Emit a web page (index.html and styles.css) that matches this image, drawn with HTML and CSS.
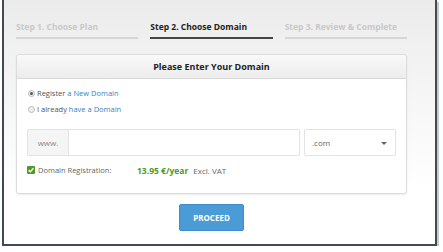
FILE: index.html
```html
<!DOCTYPE html>
<html>
<head>
<meta charset="utf-8">
<link rel="stylesheet" href="styles.css">
</head>
<body>
<div class="frame">
  <div class="steps">
    <div class="step done">Step 1. Choose Plan</div>
    <div class="step active">Step 2. Choose Domain</div>
    <div class="step">Step 3. Review &amp; Complete</div>
  </div>
  <div class="card">
    <div class="card-head">Please Enter Your Domain</div>
    <div class="card-body">
      <label class="radio"><span class="dot checked"></span>Register&nbsp;<a>a New Domain</a></label>
      <label class="radio"><span class="dot"></span>I already&nbsp;<a>have a Domain</a></label>
      <div class="domain-row">
        <div class="group">
          <span class="addon">www.</span>
          <span class="input"></span>
        </div>
        <div class="select">.com<span class="caret"></span></div>
      </div>
      <div class="reg">
        <span class="check"><svg viewBox="0 0 8 8" width="8" height="8"><path d="M1.6 4.2 L3.3 5.8 L6.4 2.3" fill="none" stroke="#fff" stroke-width="1.3"/></svg></span>
        <span class="reg-label">Domain Registration:</span>
        <span class="price">13.95 €/year</span>
        <span class="vat">Excl. VAT</span>
      </div>
    </div>
  </div>
  <div class="actions"><button class="btn">PROCEED</button></div>
</div>
</body>
</html>
```

FILE: styles.css
```css
html, body { margin: 0; padding: 0; background: #fff; }
body { font-family: "Open Sans", "Liberation Sans", sans-serif; color: #333; }
.frame {
  box-sizing: border-box;
  margin-left: 2px;
  width: 435px;
  height: 246px;
  padding: 0 28px 0 12px;
  border: 2px solid #3f4957;
  border-top: 0;
  box-shadow: 2px 2px 0 #c9c9c9;
  background: linear-gradient(#ebebeb 0, #f1f1f1 50px, #f9f9f9 130px, #fff 190px);
}
.steps {
  display: grid;
  grid-template-columns: repeat(3, 1fr);
  column-gap: 12px;
  padding-top: 21px;
}
.step {
  font-size: 8.5px;
  font-weight: 700;
  color: #c9c9c9;
  padding-bottom: 4px;
  border-bottom: 2px solid #d6d6d6;
  line-height: 12px;
  white-space: nowrap;
}
.step.active { color: #222; border-bottom-color: #444; }
.card {
  margin-top: 15px;
  background: #fff;
  border: 1px solid #dcdcdc;
  border-radius: 3px;
  box-shadow: 0 1px 2px rgba(0,0,0,0.08);
}
.card-head {
  height: 23px;
  line-height: 23px;
  text-align: center;
  font-size: 9px;
  font-weight: 700;
  color: #222;
  background: linear-gradient(#f9f9f9, #ececec);
  border-bottom: 1px solid #dadada;
  border-radius: 3px 3px 0 0;
}
.card-body { padding: 6px 10px 15px 10px; }
.radio {
  display: flex;
  align-items: center;
  font-size: 7.5px;
  color: #555;
  height: 16px;
  padding-left: 1px;
}
.radio a { color: #3b7fc4; }
.dot {
  width: 5px; height: 5px;
  border: 1px solid #bbb;
  border-radius: 50%;
  background: #eee;
  margin-right: 2px;
  position: relative;
}
.dot.checked::after {
  content: "";
  position: absolute;
  left: 1px; top: 1px;
  width: 3px; height: 3px;
  border-radius: 50%;
  background: #555;
}
.domain-row {
  display: flex;
  gap: 4px;
  margin-top: 12px;
  height: 27px;
}
.group {
  flex: 1;
  display: flex;
  border: 1px solid #e3e3e3;
  border-radius: 2px;
}
.addon {
  width: 40px;
  background: #f5f5f5;
  border-right: 1px solid #e3e3e3;
  font-size: 8px;
  color: #888;
  display: flex;
  align-items: center;
  justify-content: center;
}
.input { flex: 1; }
.select {
  box-sizing: border-box;
  width: 92px;
  border: 1px solid #e3e3e3;
  border-radius: 2px;
  font-size: 8px;
  color: #666;
  display: flex;
  align-items: center;
  padding-left: 7px;
  position: relative;
}
.caret {
  position: absolute;
  right: 8px; top: 12px;
  border-left: 3px solid transparent;
  border-right: 3px solid transparent;
  border-top: 3px solid #666;
}
.reg {
  display: flex;
  align-items: center;
  margin-top: 6px;
  height: 16px;
  font-size: 7.5px;
  color: #666;
}
.check {
  width: 8px; height: 8px;
  background: #4e9a2a;
  border-radius: 1px;
  display: flex;
  margin-right: 3px;
}
.reg-label { width: 99px; }
.price { color: #4e9a2a; font-weight: 700; font-size: 8.5px; margin-right: 5px; }
.vat { font-size: 8px; }
.actions { display: flex; justify-content: center; padding-top: 10px; }
.btn {
  width: 65px; height: 27px;
  background: #4b9bd6;
  border: 1px solid #3f8dc8;
  border-radius: 2px;
  color: #fff;
  font-family: "Open Sans", "Liberation Sans", sans-serif;
  font-weight: 700;
  font-size: 8px;
  padding: 0;
}
```
